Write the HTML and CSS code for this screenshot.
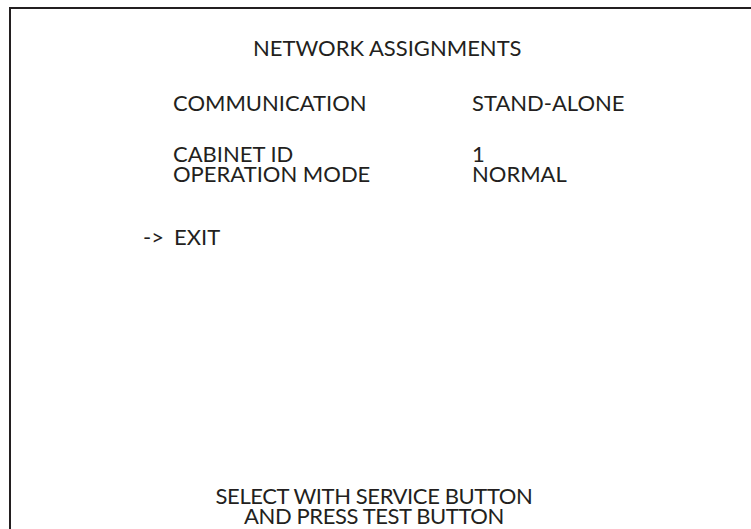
FILE: index.html
```html
<!DOCTYPE html>
<html>
<head>
<meta charset="utf-8">
<link rel="stylesheet" href="styles.css">
</head>
<body>
<div class="frame">
  <div class="title">NETWORK ASSIGNMENTS</div>
  <div class="rows">
    <div class="row first"><span class="label">COMMUNICATION</span><span class="value">STAND-ALONE</span></div>
    <div class="row gap"><span class="label">CABINET ID</span><span class="value">1</span></div>
    <div class="row"><span class="label">OPERATION MODE</span><span class="value">NORMAL</span></div>
    <div class="exit"><span class="arrow">-&gt;</span><span class="label">EXIT</span></div>
  </div>
  <div class="footer">
    <div>SELECT WITH SERVICE BUTTON</div>
    <div>AND PRESS TEST BUTTON</div>
  </div>
</div>
</body>
</html>
```
FILE: styles.css
```css
html, body {
  margin: 0;
  padding: 0;
  background: #ffffff;
}
body {
  width: 751px;
  height: 529px;
  overflow: hidden;
  font-family: "Lato", "Noto Sans", sans-serif;
  font-size: 22px;
  line-height: 20px;
  color: #231f20;
}
.frame {
  margin: 7px 0 0 9px;
  height: 522px;
  border-top: 2px solid #231f20;
  border-left: 2px solid #231f20;
  box-sizing: border-box;
  display: flex;
  flex-direction: column;
}
.title {
  margin-top: 29px;
  padding-left: 242px;
}
.rows {
  margin-top: 35px;
  display: flex;
  flex-direction: column;
}
.row {
  display: grid;
  grid-template-columns: 299px auto;
  padding-left: 162px;
}
.row.gap {
  margin-top: 31px;
}
.exit {
  margin-top: 43px;
  display: flex;
  padding-left: 132px;
}
.arrow {
  width: 31px;
}
.footer {
  margin-top: auto;
  margin-bottom: 3px;
  display: flex;
  flex-direction: column;
  align-items: center;
  padding-right: 14px;
  letter-spacing: -0.4px;
}
```
